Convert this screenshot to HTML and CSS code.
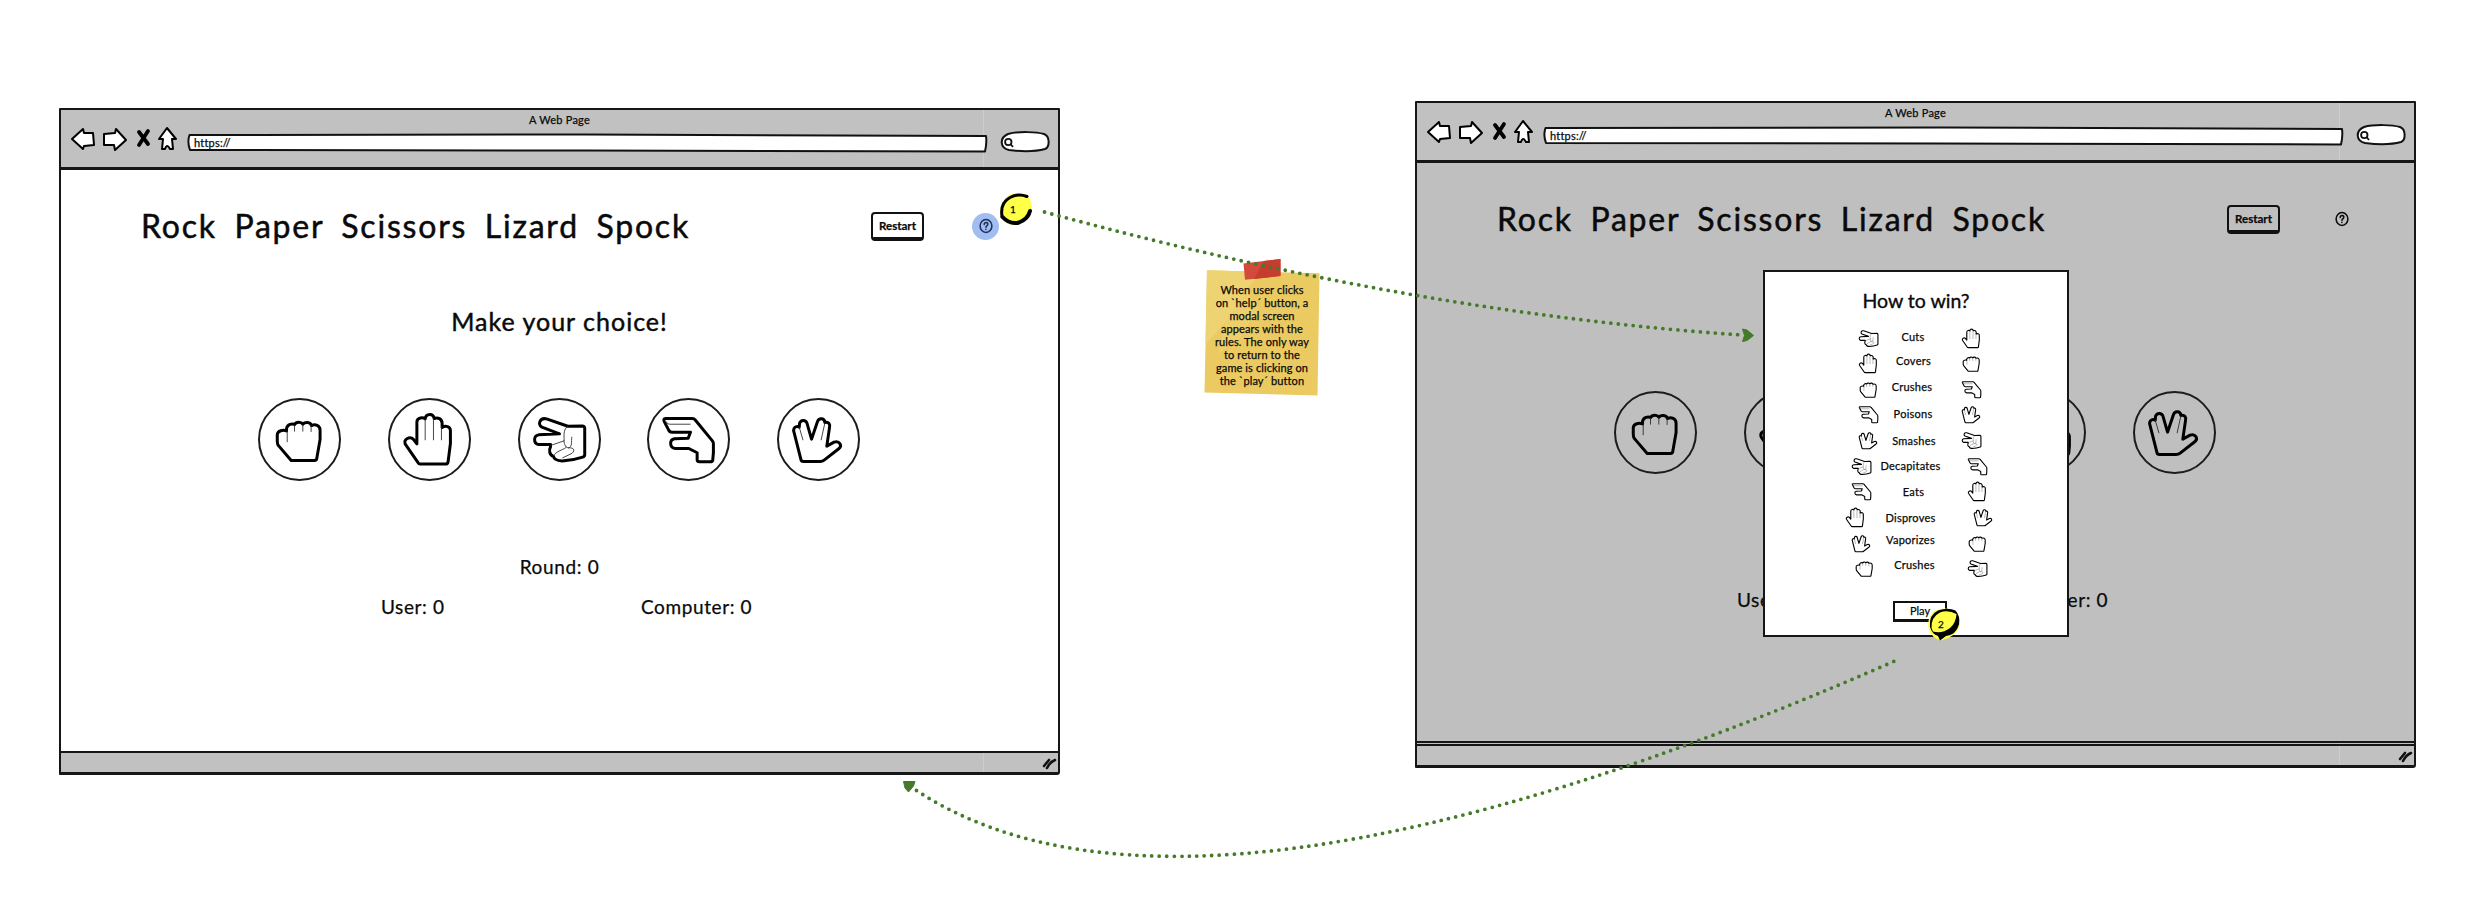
FILE: index.html
```html
<!DOCTYPE html>
<html lang="en">
<head>
<meta charset="utf-8">
<title>Rock Paper Scissors Lizard Spock – wireframe</title>
<link rel="stylesheet" href="styles.css">
</head>
<body>
<svg class="defs" width="0" height="0" aria-hidden="true">
  <symbol id="rock" viewBox="0 0 250 250">
    <path class="outline" d="M100 188L63 145Q58 140 58 130V110C59 98 76 95 86 99V92C88 78 104 76 110 80C115 71 130 71 135 79C142 71 158 72 161 83C172 78 187 82 187 97V125L177 182Q176 188 170 188Z"/>
    <path class="crease" d="M88 98V132M110 82V100M135 80V100M160 83V101"/>
  </symbol>
  <symbol id="paper" viewBox="0 0 250 250">
    <path class="outline" d="M97 199Q93 199 90 194L52 139C46 124 66 114 76 124L87 138V72C88 58 106 58 112 63C114 45 137 45 139 62C150 57 163 62 163 77V89C173 82 188 86 188 98V137L181 192Q180 199 173 199Z"/>
    <path class="crease" d="M112 63V126M137 62V126M161 85V126"/>
  </symbol>
  <symbol id="scissors" viewBox="0 0 250 250">
    <path class="outline" d="M150 85L193 84Q201 84 201 92V170Q201 176 195 178Q165 188 133 190C120 189 108 184 107 176C95 172 92 158 98 147V140H62C46 137 46 114 62 111L125 108L72 88C58 80 66 58 86 63Z"/>
    <path class="crease" d="M150 85C138 92 138 110 139 122C137 135 142 150 152 150C164 148 160 132 162 118M98 143L139 129M107 174C115 160 132 158 145 149M152 150C172 148 172 162 160 168L135 180"/>
  </symbol>
  <symbol id="lizard" viewBox="0 0 250 250">
    <path class="outline" d="M56 62H136Q142 62 146 67L197 129Q200 133 200 138V165L198 187Q197 192 190 192H158Q151 192 151 185V165L126 152H85C67 150 67 126 83 123L124 121L131 103H75Q68 103 65 96L52 71Q48 62 56 62Z"/>
    <path class="crease" d="M58 72Q60 79 68 79H130"/>
  </symbol>
  <symbol id="spock" viewBox="0 0 250 250">
    <path class="outline" d="M72 185L50 98C50 87 60 84 67 88L68 76C72 64 87 66 90 75L104 124L122 71C127 58 144 61 144 74C156 71 161 79 158 90L150 145L172 133C188 128 198 143 186 153L142 187Q137 191 130 191H80Q73 191 72 185Z"/>
    <path class="crease" d="M67 88L78 126M144 76L133 126"/>
  </symbol>
  <symbol id="nav" viewBox="0 0 120 30">
    <g class="nav-shape">
      <path d="M3 15L14 5L15 9L24 9L25 21L15 22L14 25Z"/>
      <path d="M35 10L46 9L47 5L57 16L46 26L45 21L35 21Z"/>
      <path class="nav-cross" d="M70 8L79 20M79 7L70 21"/>
      <path d="M98 4L90 15H94L93 25H96Q98 19 101 25H104L103 15H107Z"/>
    </g>
  </symbol>
  <symbol id="search" viewBox="0 0 54 24">
    <path class="search-pill" d="M9 4C20 1 38 2 45 4C51 6 51 17 46 19C35 22 18 21 10 20C1 18 0 8 9 4Z"/>
    <circle class="search-lens" cx="9.3" cy="12" r="3.2"/>
    <path class="search-lens" d="M11.500 14L14 17"/>
  </symbol>
  <symbol id="urlfield" viewBox="0 0 804 20" preserveAspectRatio="none">
    <path class="url-shape" d="M3.500 2L400 1.500L800 3Q801 10 799 18.500L400 17.500L4 17Q1 9 3.500 2Z"/>
  </symbol>
  <symbol id="grip" viewBox="0 0 16 14">
    <path class="grip-lines" d="M3 10L8 4M6 12Q9 6 14 4"/>
  </symbol>
</svg>

<main class="canvas">
  <section class="window window-game">
    <header class="chrome">
      <h2 class="chrome-title">A Web Page</h2>
      <div class="toolbar">
        <svg class="nav-icons"><use href="#nav"/></svg>
        <div class="url"><svg class="url-frame"><use href="#urlfield"/></svg><span class="url-text">https://</span></div>
        <svg class="search"><use href="#search"/></svg>
      </div>
    </header>
    <div class="page">
      <div class="top">
        <h1 class="title">Rock Paper Scissors Lizard Spock</h1>
        <button class="restart">Restart</button>
        <span class="help help-active">
          <svg class="help-icon" viewBox="0 0 16 16"><ellipse cx="8" cy="8" rx="5.900" ry="6.400"/><path d="M6.200 6.500Q6.200 4.500 8.200 4.500Q10 4.600 9.800 6.300Q9.500 7.600 8.200 8.300L8 9.300M7.900 11.300V11.500"/></svg>
        </span>
      </div>
      <p class="prompt">Make your choice!</p>
      <div class="choices">
        <span class="choice"><svg><use href="#rock"/></svg></span>
        <span class="choice"><svg><use href="#paper"/></svg></span>
        <span class="choice"><svg><use href="#scissors"/></svg></span>
        <span class="choice"><svg><use href="#lizard"/></svg></span>
        <span class="choice"><svg><use href="#spock"/></svg></span>
      </div>
      <p class="round">Round: 0</p>
      <div class="scores"><span class="score-user">User: 0</span><span class="score-computer">Computer: 0</span></div>
    </div>
    <footer class="status"><svg class="grip"><use href="#grip"/></svg></footer>
  </section>

  <section class="window window-rules">
    <header class="chrome">
      <h2 class="chrome-title">A Web Page</h2>
      <div class="toolbar">
        <svg class="nav-icons"><use href="#nav"/></svg>
        <div class="url"><svg class="url-frame"><use href="#urlfield"/></svg><span class="url-text">https://</span></div>
        <svg class="search"><use href="#search"/></svg>
      </div>
    </header>
    <div class="page">
      <div class="top">
        <h1 class="title">Rock Paper Scissors Lizard Spock</h1>
        <button class="restart">Restart</button>
        <span class="help">
          <svg class="help-icon" viewBox="0 0 16 16"><ellipse cx="8" cy="8" rx="5.900" ry="6.400"/><path d="M6.200 6.500Q6.200 4.500 8.200 4.500Q10 4.600 9.800 6.300Q9.500 7.600 8.200 8.300L8 9.300M7.900 11.300V11.500"/></svg>
        </span>
      </div>
      <div class="choices choices-behind">
        <span class="choice"><svg><use href="#rock"/></svg></span>
        <span class="choice"><svg><use href="#paper"/></svg></span>
        <span class="choice"><svg><use href="#scissors"/></svg></span>
        <span class="choice"><svg><use href="#lizard"/></svg></span>
        <span class="choice"><svg><use href="#spock"/></svg></span>
      </div>
      <div class="scores scores-behind"><span class="score-user">User: 0</span><span class="score-computer">Computer: 0</span></div>
    </div>
    <footer class="status"><svg class="grip"><use href="#grip"/></svg></footer>

    <div class="modal">
      <h3 class="modal-title">How to win?</h3>
      <ul class="rules">
        <li class="rule"><svg><use href="#scissors"/></svg><span>Cuts</span><svg><use href="#paper"/></svg></li>
        <li class="rule"><svg><use href="#paper"/></svg><span>Covers</span><svg><use href="#rock"/></svg></li>
        <li class="rule"><svg><use href="#rock"/></svg><span>Crushes</span><svg><use href="#lizard"/></svg></li>
        <li class="rule"><svg><use href="#lizard"/></svg><span>Poisons</span><svg><use href="#spock"/></svg></li>
        <li class="rule"><svg><use href="#spock"/></svg><span>Smashes</span><svg><use href="#scissors"/></svg></li>
        <li class="rule"><svg><use href="#scissors"/></svg><span>Decapitates</span><svg><use href="#lizard"/></svg></li>
        <li class="rule"><svg><use href="#lizard"/></svg><span>Eats</span><svg><use href="#paper"/></svg></li>
        <li class="rule"><svg><use href="#paper"/></svg><span>Disproves</span><svg><use href="#spock"/></svg></li>
        <li class="rule"><svg><use href="#spock"/></svg><span>Vaporizes</span><svg><use href="#rock"/></svg></li>
        <li class="rule"><svg><use href="#rock"/></svg><span>Crushes</span><svg><use href="#scissors"/></svg></li>
      </ul>
      <button class="play">Play</button>
    </div>
  </section>

  <aside class="note">
    <svg class="note-paper" viewBox="0 0 116 136">
      <path fill="#ebcb61" d="M3 10.300L115.500 13.300L113.500 135.500L.5 132.500Z"/>
      <path fill="#eed373" d="M3 10.300L58 12L42 30Q34 58 22 62L1.500 84Z"/>
      <path fill="#edcf6c" d="M22 62L42 30L54 48L36 78L14 94Z"/>
      <path fill="#d24a3b" d="M39.500 3.500L76.500 -1V16L41 19.800Z"/>
      <path fill="#c63c2f" d="M60 1L76.500 -1V16L50 19Z"/>
    </svg>
    <p class="note-text">When user clicks<br>on `help´ button, a<br>modal screen<br>appears with the<br>rules. The only way<br>to return to the<br>game is clicking on<br>the `play´ button</p>
  </aside>

  <svg class="arrows" viewBox="0 0 2474 920">
    <path class="dots" d="M1044.500 212Q1415 313 1742 335"/>
    <path class="head" d="M1742.500 329L1747 330L1753.500 335.500L1747 340.500L1742.500 341.500L1744.500 335.500Z"/>
    <path class="dots" d="M916.500 790.500Q1190 970 1897 660"/>
    <path class="head" d="M903.500 781.500H915L913.500 786L908.500 792L905 788Z"/>
  </svg>

  <div class="badge badge-one">
    <svg viewBox="0 0 36 36"><path fill="#ffff45" d="M11 4Q20 0 29 4Q35 11 33 21Q30 32 17 34Q7 34 3 26Q0 12 11 4Z"/><path class="badge-line" d="M4 25Q2 12 12 6.500Q20 2 29 5.500"/><path class="badge-shade" d="M4.500 26Q12 34 21 31.500Q30 28 32 20"/></svg>
    <span>1</span>
  </div>
  <div class="badge badge-two">
    <svg viewBox="0 0 36 36"><path fill="#ffff45" d="M8 5Q19 0 29 5Q35 12 33.500 20Q30 31 15 34.500Q6 32 3 24Q0 13 8 5Z"/><path d="M4 21Q2.500 9 12 4.500Q22 1 29.500 4.500Q34.500 10 33 18.500Q30 29 20 30L14 34.500L12 30Q6 28 4 21Z"/><path fill="#ffff45" d="M5.500 22Q5 11 14 6.500Q22 3.500 30.500 8Q30 17 24 22Q16 28 7 25.500Z"/></svg>
    <span>2</span>
  </div>
</main>
</body>
</html>
```
FILE: styles.css
```css
* { box-sizing: border-box; }

body {
  margin: 0;
  background: #fff;
  color: #0a0a0a;
  font-family: Lato, "Open Sans", sans-serif;
  -webkit-text-stroke: .25px currentColor;
}

h1, h2, h3, p, ul { margin: 0; padding: 0; font-weight: 400; list-style: none; }

button {
  padding: 0;
  color: inherit;
  font-family: inherit;
  -webkit-text-stroke: inherit;
}

.defs { position: absolute; }

.canvas {
  position: relative;
  width: 2474px;
  height: 920px;
  overflow: hidden;
}

/* Browser windows */
.window {
  position: absolute;
  display: flex;
  flex-direction: column;
  width: 1001px;
  height: 667px;
  border: 2px solid #161616;
  border-bottom-width: 3px;
  border-radius: 1px 1px 3px 1px;
  background: #fff;
}
.window-game { left: 59px; top: 108px; }
.window-rules { left: 1415px; top: 101px; background: #bfbfbf; }

.chrome {
  flex: none;
  height: 60px;
  border-bottom: 3px solid #161616;
  background: linear-gradient(90deg, transparent 922px, #cdcdcd 922px 923px, transparent 923px) #c1c1c1;
}
.chrome-title {
  height: 22px;
  font-size: 11px;
  line-height: 20px;
  letter-spacing: .25px;
  text-align: center;
}
.toolbar { display: flex; align-items: flex-start; height: 30px; padding-left: 8px; }
.nav-icons { flex: none; width: 120px; height: 30px; margin-top: -8px; }
.nav-shape { fill: #fff; stroke: #000; stroke-width: 2; stroke-linejoin: round; }
.nav-cross { fill: none; stroke-width: 3.800; stroke-linecap: round; }
.url { position: relative; width: 804px; height: 20px; margin: 1px 0 0 -3px; padding-left: 8px; font-size: 11px; line-height: 19px; }
.url-frame { position: absolute; left: 0; top: 0; width: 804px; height: 20px; }
.url-shape { fill: #fff; stroke: #111; stroke-width: 2; stroke-linejoin: round; }
.url-text { position: relative; letter-spacing: .2px; }
.search { flex: none; width: 54px; height: 24px; margin: -2px 0 0 9px; }
.search-pill { fill: #fff; stroke: #111; stroke-width: 2; }
.search-lens { fill: none; stroke: #111; stroke-width: 1.800; }

.page { flex: 1; display: flex; flex-direction: column; }
.top { display: flex; align-items: center; height: 50px; margin-top: 31px; padding-left: 80px; }
.title {
  width: 730px;
  padding-bottom: 1px;
  font-size: 32px;
  line-height: 50px;
  letter-spacing: 1.800px;
  word-spacing: 7.500px;
  white-space: nowrap;
  -webkit-text-stroke-width: .5px;
}
.restart {
  width: 53px;
  height: 29px;
  border: 2px solid #111;
  border-bottom-width: 4px;
  border-radius: 4px;
  background: none;
  font-size: 11.500px;
  font-weight: 700;
}
.help {
  display: flex;
  align-items: center;
  justify-content: center;
  width: 27px;
  height: 27px;
  margin-left: 48px;
  border-radius: 50%;
}
.help-active { background: #a1bdf1; color: #1d2f5c; }
.help-icon { width: 16px; height: 16px; fill: none; stroke: currentColor; stroke-width: 1.500; stroke-linecap: round; }

.prompt {
  height: 40px;
  margin-top: 50px;
  font-size: 25px;
  line-height: 40px;
  letter-spacing: 1px;
  text-align: center;
  -webkit-text-stroke-width: .45px;
}
.choices { display: flex; gap: 46.800px; margin: 57px 0 0 197px; }
.choices-behind { margin-top: 147px; }
.choice {
  display: block;
  width: 83px;
  height: 83px;
  border: 2px solid #1c1c1c;
  border-radius: 50%;
}
.choice svg { display: block; width: 83px; height: 83px; margin: -2px; }
.outline { fill: none; stroke: #000; stroke-width: 9; stroke-linejoin: round; }
.crease { fill: none; stroke: #222; stroke-width: 2.500; stroke-linecap: round; }

.round { margin-top: 72px; height: 28px; font-size: 19px; line-height: 28px; letter-spacing: .650px; text-align: center; }
.scores { display: flex; margin-top: 12px; font-size: 19px; line-height: 28px; letter-spacing: .600px; }
.scores-behind { margin-top: 112px; }
.score-user { width: 260px; margin-left: 320px; }

.status {
  display: flex;
  flex: none;
  justify-content: flex-end;
  align-items: center;
  height: 21px;
  border-top: 2px solid #161616;
  background: linear-gradient(90deg, transparent 922px, #cdcdcd 922px 923px, transparent 923px) #c1c1c1;
}
.window-rules .status { border-top: 5px double #161616; height: 24px; }
.grip { width: 16px; height: 14px; margin-right: 1px; }
.grip-lines { fill: none; stroke: #111; stroke-width: 2.600; stroke-linecap: round; }

/* Rules dialog */
.modal {
  position: absolute;
  left: 346px;
  top: 167px;
  display: flex;
  flex-direction: column;
  width: 306px;
  height: 367px;
  border: 2px solid #161616;
  background: #fff;
}
.modal-title { height: 28px; margin-top: 15px; font-size: 19.500px; line-height: 28px; text-align: center; -webkit-text-stroke-width: .35px; }
.rules { margin-top: 7.500px; }
.rule {
  display: grid;
  grid-template-columns: 30px 1fr 30px;
  align-items: center;
  height: 25.670px;
  margin: 0 81px 0 88px;
  font-size: 11px;
  letter-spacing: .25px;
  text-align: center;
}
.rule svg { width: 31px; height: 31px; }
.rule span { line-height: 12px; white-space: nowrap; }
.rule .outline { stroke-width: 10; }
.rule .crease { stroke-width: 3; }
.rule:nth-child(1) span { padding-bottom: 3px; padding-right: 13px; }
.rule:nth-child(2) span { padding-bottom: 6px; padding-right: 12px; }
.rule:nth-child(3) span { padding-bottom: 5px; padding-right: 15px; }
.rule:nth-child(4) span { padding-bottom: 1px; padding-right: 13px; }
.rule:nth-child(5) span { padding-top: 1px; padding-right: 11px; }
.rule:nth-child(n+6) { margin-left: 81px; margin-right: 75px; }
.rule:nth-child(6) span { padding-right: 17px; }
.rule:nth-child(7) span { padding-top: 1px; padding-right: 11px; }
.rule:nth-child(8) { margin-left: 75px; margin-right: 69px; }
.rule:nth-child(8) span { padding-top: 1px; padding-right: 17px; }
.rule:nth-child(9) span { padding-bottom: 6px; padding-right: 17px; }
.rule:nth-child(10) { margin-left: 84px; }
.rule:nth-child(10) span { padding-bottom: 7px; padding-right: 12px; }
.play {
  flex: none;
  width: 54px;
  height: 21px;
  margin: 22px 0 0 128px;
  border: 2px solid #111;
  border-bottom-width: 3px;
  background: #fff;
  font-size: 11px;
  line-height: 14px;
}

/* Annotations */
.note { position: absolute; left: 1204px; top: 260px; width: 116px; height: 136px; }
.note-paper { position: absolute; inset: 0; width: 116px; height: 136px; overflow: visible; }
.note-text { position: relative; padding-top: 22.500px; font-size: 11px; line-height: 13px; letter-spacing: .1px; text-align: center; }

.arrows { position: absolute; inset: 0; width: 2474px; height: 920px; }
.dots { fill: none; stroke: #457a2b; stroke-width: 3.800; stroke-linecap: round; stroke-dasharray: 0 7.500; }
.head { fill: #457a2b; stroke: #457a2b; stroke-linejoin: round; }

.badge { position: absolute; width: 36px; height: 36px; font-size: 10px; }
.badge svg { position: absolute; inset: 0; width: 36px; height: 36px; }
.badge span { position: absolute; left: 12px; top: 12px; }
.badge-line { fill: none; stroke: #000; stroke-width: 3; stroke-linecap: round; }
.badge-shade { fill: none; stroke: #000; stroke-width: 4; stroke-linecap: round; }
.badge-one { left: 998px; top: 191px; }
.badge-two { left: 1926px; top: 606px; }
```
